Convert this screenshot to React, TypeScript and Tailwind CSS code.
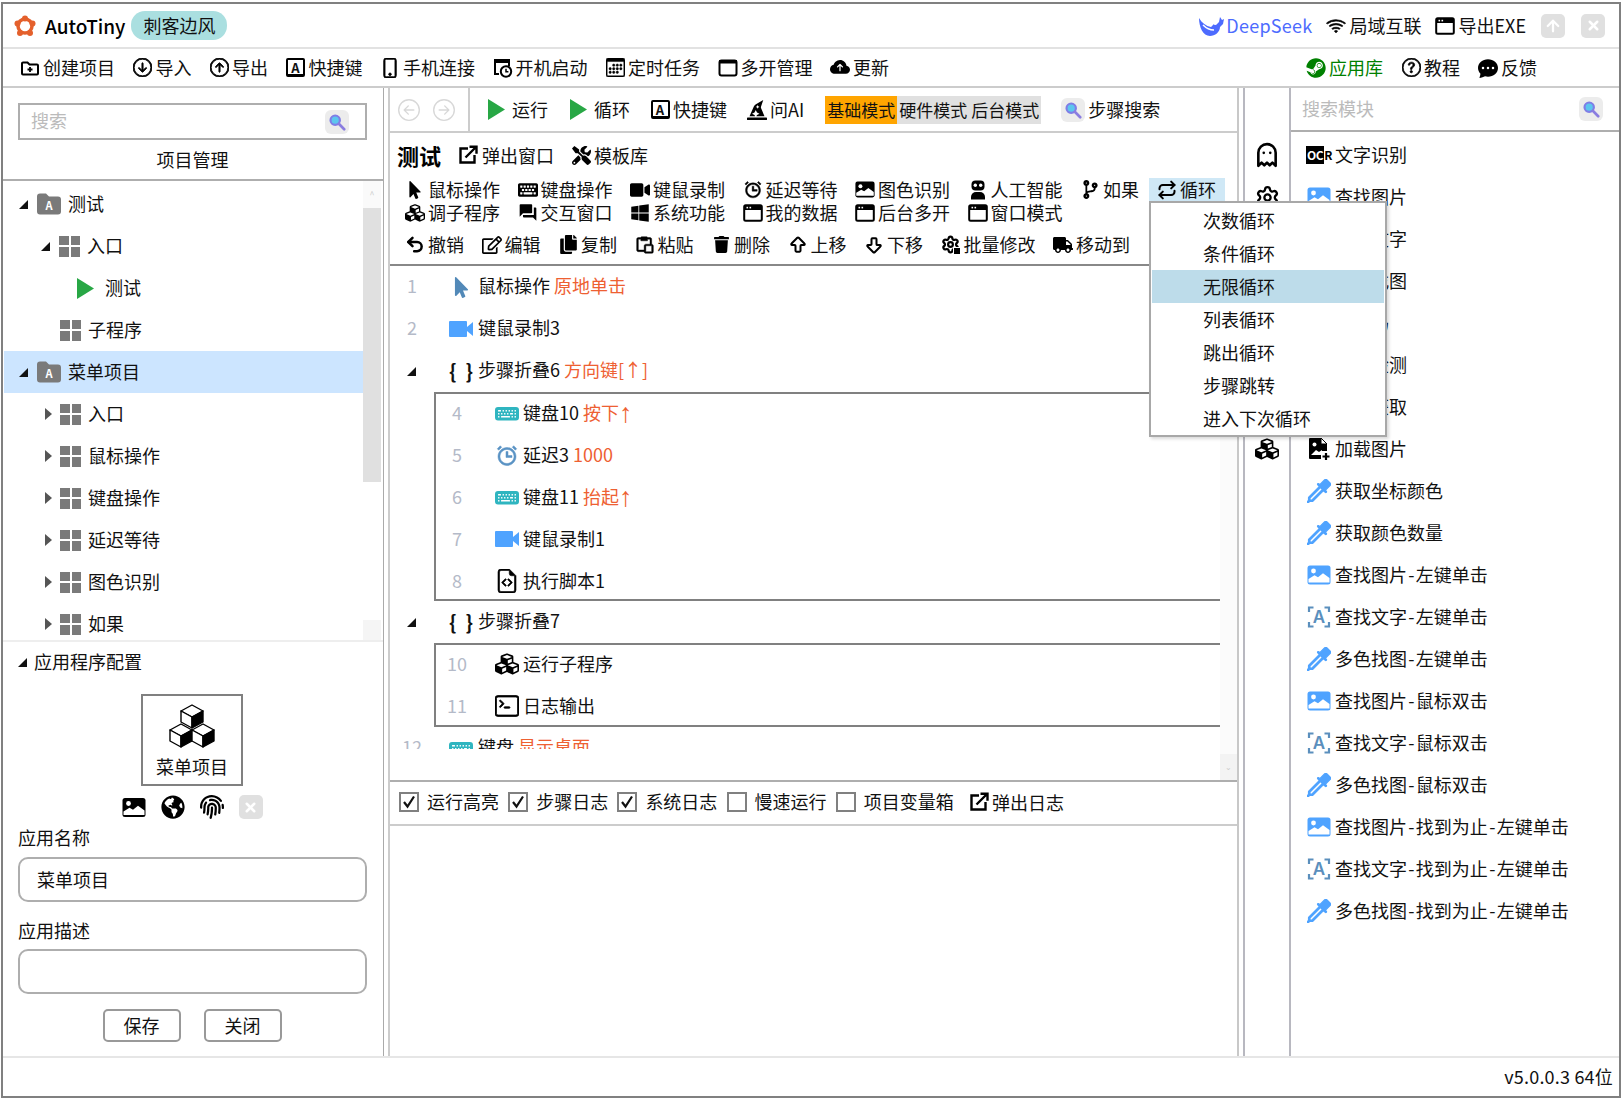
import React from 'react';
import { ArrowBigDown, ArrowBigUp, ArrowUp, Ghost, Repeat, Settings, Undo2, X } from 'lucide-react';
import {
  FaCodeBranch,
  FaCopy,
  FaCubes,
  FaFingerprint,
  FaGlobeAmericas,
  FaHatWizard,
  FaKeyboard,
  FaMousePointer,
  FaRegEdit,
  FaSteam,
  FaTools,
  FaTrash,
  FaTruck,
  FaVideo,
  FaWindows,
} from 'react-icons/fa';
import {
  BsArrowDownCircle,
  BsArrowLeftCircle,
  BsArrowRightCircle,
  BsArrowUpCircle,
  BsCalendar3,
  BsChatDotsFill,
  BsCloudArrowUpFill,
  BsEyedropper,
  BsFileEarmarkCode,
  BsKeyboardFill,
  BsPhone,
  BsQuestionCircle,
  BsTerminal,
  BsWifi,
} from 'react-icons/bs';
import { BiAlarm, BiPaste } from 'react-icons/bi';
import { MdQuestionAnswer } from 'react-icons/md';

const Tool = ({ icon, label, className = '', textClass = '' }: { icon: React.ReactNode; label: string; className?: string; textClass?: string }) => (
  <div className={`flex shrink-0 items-center gap-[3px] ${className}`}>
    <span className="flex h-5 w-5 shrink-0 items-center justify-center">{icon}</span>
    <span className={`whitespace-nowrap ${textClass}`}>{label}</span>
  </div>
);

const KeyA = () => (
  <span className="flex h-[19px] w-[19px] items-center justify-center rounded-[2px] border-2 border-b-[3px] border-black text-[13px] font-bold leading-none">
    A
  </span>
);

const WindowIcon = () => (
  <svg viewBox="0 0 20 20" className="h-5 w-5">
    <rect x="1.2" y="2.2" width="17.6" height="15.6" rx="1.5" fill="none" stroke="#000" strokeWidth="2" />
    <rect x="1" y="2" width="18" height="5" fill="#000" />
    <rect x="3.5" y="3.8" width="1.6" height="1.6" fill="#fff" />
    <rect x="6.5" y="3.8" width="1.6" height="1.6" fill="#fff" />
  </svg>
);

const PlainWindow = () => (
  <svg viewBox="0 0 20 20" className="h-5 w-5">
    <rect x="1.5" y="2.5" width="17" height="15" rx="2" fill="none" stroke="#000" strokeWidth="2" />
    <rect x="1" y="2" width="18" height="3.5" fill="#000" />
  </svg>
);

const BootIcon = () => (
  <svg viewBox="0 0 20 20" className="h-5 w-5">
    <rect x="1" y="1" width="16" height="4" fill="#000" />
    <path d="M2 5v11h4M16 5v3" fill="none" stroke="#000" strokeWidth="2" />
    <circle cx="13" cy="13.5" r="5.2" fill="#fff" stroke="#000" strokeWidth="2" />
    <path d="M13 10.8v3h2.4" fill="none" stroke="#000" strokeWidth="1.5" />
  </svg>
);

const FolderPlusIcon = () => (
  <svg viewBox="0 0 20 20" className="h-5 w-5">
    <path d="M2 5.5a1 1 0 0 1 1-1h4.5l2 2H17a1 1 0 0 1 1 1v8a1 1 0 0 1-1 1H3a1 1 0 0 1-1-1z" fill="none" stroke="#000" strokeWidth="2" />
    <path d="M10 9v5M7.5 11.5h5" stroke="#000" strokeWidth="1.8" />
  </svg>
);

const PopOut = () => (
  <svg viewBox="0 0 20 20" className="h-5 w-5">
    <path d="M10 3.500H2.500v14h14V10" fill="none" stroke="#000" strokeWidth="2.400" />
    <path d="M7.500 12.500L17 3M11.500 1.800h7v7" fill="none" stroke="#000" strokeWidth="2.400" />
  </svg>
);

const Pic = ({ color = '#000', size = 'h-5 w-6' }: { color?: string; size?: string }) => (
  <svg viewBox="0 0 24 20" className={size}>
    <rect x="0.5" y="0.5" width="23" height="19" rx="2.5" fill={color} />
    <circle cx="6.5" cy="6" r="2.4" fill="#fff" />
    <path d="M1.5 17.5v-3.5l6-3.8 3.5 2 5-4 6.500 4.800v4.500z" fill="#fff" />
  </svg>
);

const Robot = () => (
  <svg viewBox="0 0 20 20" className="h-5 w-5">
    <rect x="3.5" y="0.500" width="13" height="10" rx="4" fill="#000" />
    <circle cx="7.300" cy="5.200" r="1.700" fill="#fff" />
    <circle cx="12.700" cy="5.200" r="1.700" fill="#fff" />
    <path d="M3 19.500v-2.500a5 5 0 0 1 5-5h4a5 5 0 0 1 5 5v2.500z" fill="#000" />
  </svg>
);

const GearBatch = () => (
  <span className="relative flex h-5 w-5 items-center justify-center">
    <Settings size={19} strokeWidth={2.8} color="#000" />
    <span className="absolute bottom-0 right-0 h-[8px] w-[8px] border border-white bg-black" />
  </span>
);

const Play = () => (
  <svg viewBox="0 0 17 21" className="h-[21px] w-[17px] shrink-0">
    <polygon points="0,0 17,10.500 0,21" fill="#28a745" />
  </svg>
);

const SearchBtn = () => (
  <span className="flex h-6 w-6 shrink-0 items-center justify-center rounded-[6px] bg-[#ececec]">
    <svg viewBox="0 0 20 20" className="h-[18px] w-[18px]">
      <circle cx="8" cy="8" r="5.200" fill="#5cc6ee" stroke="#7f7de6" strokeWidth="2.400" />
      <path d="M12 12l6 6" stroke="#8a7de0" strokeWidth="3" strokeLinecap="round" />
    </svg>
  </span>
);

const GrayBtn = ({ children }: { children: React.ReactNode }) => (
  <span className="flex h-6 w-6 items-center justify-center rounded-[5px] bg-[#e0e0e0]">{children}</span>
);

const CornerArrow = () => (
  <svg viewBox="0 0 9 9" className="h-[9px] w-[9px] shrink-0">
    <polygon points="9,0 9,9 0,9" fill="#111" />
  </svg>
);

const SideArrow = () => (
  <svg viewBox="0 0 7 12" className="h-3 w-[7px] shrink-0">
    <polygon points="0,0 7,6 0,12" fill="#555" />
  </svg>
);

const FolderA = () => (
  <span className="relative flex h-[22px] w-6 shrink-0 items-center justify-center">
    <svg viewBox="0 0 24 22" className="absolute inset-0 h-[22px] w-6">
      <path d="M0 3.500a3 3 0 0 1 3-3h6l3 3h9a3 3 0 0 1 3 3v12a3 3 0 0 1-3 3H3a3 3 0 0 1-3-3z" fill="#7a7a7a" />
    </svg>
    <span className="relative mt-[3px] text-[11px] font-bold leading-none text-white">A</span>
  </span>
);

const GridIcon = () => (
  <span className="grid h-[21px] w-[21px] shrink-0 grid-cols-2 gap-[2px]">
    <span className="bg-[#7a7a7a]" />
    <span className="bg-[#7a7a7a]" />
    <span className="bg-[#7a7a7a]" />
    <span className="bg-[#7a7a7a]" />
  </span>
);

const DeepSeekLogo = () => (
  <svg viewBox="0 0 26 22" className="h-[22px] w-[26px] shrink-0">
    <path d="M1 3c3 5 7 8 12 9l3-3 2 1 3-3 1-5 2 3 2-1-1 5-3 3c0 5-5 9-10 9C5 21 1 12 1 3z" fill="#4d6bfe" />
    <path d="M5 10c3 3 6 5 11 5" fill="none" stroke="#fff" strokeWidth="1.500" />
    <circle cx="17" cy="9" r="1" fill="#fff" />
  </svg>
);

const Logo = () => (
  <svg viewBox="0 0 22 22" className="h-[22px] w-[22px] shrink-0">
    <circle cx="11" cy="11" r="7" fill="none" stroke="#e4602c" strokeWidth="3.500" />
    <circle cx="11" cy="3.500" r="3" fill="#e4602c" />
    <circle cx="3.500" cy="8.500" r="3" fill="#e4602c" />
    <circle cx="18.500" cy="8.500" r="3" fill="#e4602c" />
    <circle cx="6" cy="18" r="3" fill="#e4602c" />
    <circle cx="16" cy="18" r="3" fill="#e4602c" />
  </svg>
);

const Cube = ({ cx, y }: { cx: number; y: number }) => (
  <g stroke="#000" strokeWidth="1.400" strokeLinejoin="round">
    <polygon points={`${cx},${y} ${cx + 11},${y + 6} ${cx},${y + 12} ${cx - 11},${y + 6}`} fill="#fff" />
    <polygon points={`${cx - 11},${y + 6} ${cx},${y + 12} ${cx},${y + 23} ${cx - 11},${y + 17}`} fill="#fff" />
    <polygon points={`${cx + 11},${y + 6} ${cx},${y + 12} ${cx},${y + 23} ${cx + 11},${y + 17}`} fill="#000" />
  </g>
);

const AppCubes = () => (
  <svg viewBox="0 0 46 44" className="h-[44px] w-[46px] shrink-0">
    <Cube cx={23} y={1} />
    <Cube cx={12} y={20} />
    <Cube cx={34} y={20} />
  </svg>
);

const ScanA = () => (
  <svg viewBox="0 0 24 24" className="h-6 w-6">
    <path d="M2 7V2.500h4.500M22 7V2.500h-4.500M2 17v4.500h4.500M22 17v4.500h-4.500" fill="none" stroke="#5b8fbd" strokeWidth="2.200" />
    <text x="12" y="18" textAnchor="middle" fontSize="17" fontFamily="Inter, sans-serif" fontWeight="600" fill="#5b8fbd">
      A
    </text>
  </svg>
);

const Dropper = () => <BsEyedropper size={24} color="#4fa3ff" stroke="#4fa3ff" strokeWidth={0.8} />;

const LoadPic = () => (
  <svg viewBox="0 0 24 24" className="h-6 w-6">
    <path d="M3 1h11l6 6v7h-6v8H3a1 1 0 0 1-1-1V2a1 1 0 0 1 1-1z" fill="#000" />
    <path d="M14 1l6 6h-6z" fill="#fff" stroke="#000" />
    <circle cx="7.500" cy="7.500" r="2" fill="#fff" />
    <path d="M4 18l5-5 3 2 3-2v1l-1 4z" fill="#fff" />
    <path d="M19 16v7M15.500 19.500h7" stroke="#000" strokeWidth="2.200" />
  </svg>
);

const OcrIcon = () => (
  <span className="flex h-6 w-6 items-center justify-center text-[12px] font-bold leading-none tracking-[-0.5px] text-black">
    <span className="bg-black px-[1px] py-[3px] text-white">OC</span>
    <span>R</span>
  </span>
);

const Braces = () => (
  <span className="flex w-6 shrink-0 justify-between text-[20px] font-bold leading-none">
    <span>{'{'}</span>
    <span>{'}'}</span>
  </span>
);

const Orange = ({ children }: { children: React.ReactNode }) => <span className="text-[#ee6032]">{children}</span>;

const NarrowArrow = () => <span className="align-[-2px] text-[27px] leading-[0] [font-family:'Liberation_Sans',sans-serif]">↑</span>;

const Video = () => (
  <svg viewBox="0 0 24 16" className="h-4 w-6">
    <rect x="0" y="0" width="18" height="16" rx="1" fill="#4fa3ff" />
    <polygon points="24,1 18,6 18,10 24,15" fill="#4fa3ff" />
  </svg>
);

const TealKey = () => <BsKeyboardFill size={24} color="#2fb5c0" />;

const treeRows: { pad: number; arrow?: 'corner' | 'side'; icon: React.ReactNode; label: string; selected?: boolean; textGap?: number }[] = [
  { pad: 15, arrow: 'corner', icon: <FolderA />, label: '测试' },
  { pad: 37, arrow: 'corner', icon: <GridIcon />, label: '入口' },
  { pad: 73, icon: <Play />, label: '测试', textGap: 11 },
  { pad: 56, icon: <GridIcon />, label: '子程序' },
  { pad: 15, arrow: 'corner', icon: <FolderA />, label: '菜单项目', selected: true },
  { pad: 41, arrow: 'side', icon: <GridIcon />, label: '入口' },
  { pad: 41, arrow: 'side', icon: <GridIcon />, label: '鼠标操作' },
  { pad: 41, arrow: 'side', icon: <GridIcon />, label: '键盘操作' },
  { pad: 41, arrow: 'side', icon: <GridIcon />, label: '延迟等待' },
  { pad: 41, arrow: 'side', icon: <GridIcon />, label: '图色识别' },
  { pad: 41, arrow: 'side', icon: <GridIcon />, label: '如果' },
];

const moduleRows: [React.ReactNode, string][] = [
  [<OcrIcon />, '文字识别'],
  [<Pic color="#4fa3ff" />, '查找图片'],
  [<ScanA />, '查找文字'],
  [<Dropper />, '多色找图'],
  [<ScanA />, '二维码'],
  [<ScanA />, '目标检测'],
  [<ScanA />, '图片获取'],
  [<LoadPic />, '加载图片'],
  [<Dropper />, '获取坐标颜色'],
  [<Dropper />, '获取颜色数量'],
  [<Pic color="#4fa3ff" />, '查找图片-左键单击'],
  [<ScanA />, '查找文字-左键单击'],
  [<Dropper />, '多色找图-左键单击'],
  [<Pic color="#4fa3ff" />, '查找图片-鼠标双击'],
  [<ScanA />, '查找文字-鼠标双击'],
  [<Dropper />, '多色找图-鼠标双击'],
  [<Pic color="#4fa3ff" />, '查找图片-找到为止-左键单击'],
  [<ScanA />, '查找文字-找到为止-左键单击'],
  [<Dropper />, '多色找图-找到为止-左键单击'],
];

const StepRow = ({ num, icon, inner, children }: { num?: string; icon: React.ReactNode; inner?: boolean; children: React.ReactNode }) => (
  <div className="flex h-[42px] items-center">
    <span className={`relative shrink-0 text-center text-[#b4bac8] ${inner ? '-top-px w-[42px]' : '-top-[2px] w-[44px]'}`}>{num}</span>
    <span className={`flex w-6 shrink-0 items-center justify-center ${inner ? 'ml-[17px]' : 'ml-[15px]'}`}>{icon}</span>
    <span className={`relative whitespace-nowrap ${inner ? '-top-px ml-[4px]' : '-top-[2px] ml-[5px]'}`}>{children}</span>
  </div>
);

const Check = ({ on, label }: { on?: boolean; label: string }) => (
  <div className="flex items-center gap-[8px]">
    <span className="flex h-5 w-5 items-center justify-center border-2 border-[#808080]">
      {on && (
        <svg viewBox="0 0 16 16" className="h-4 w-4">
          <path d="M3 8l3.500 4.500L13 2.500" fill="none" stroke="#111" strokeWidth="2.200" />
        </svg>
      )}
    </span>
    <span className="relative -top-px">{label}</span>
  </div>
);

const ModuleLabel = ({ text }: { text: string }) => (
  <span className="relative -top-px whitespace-nowrap">
    {text.split('-').map((part, i) => (
      <React.Fragment key={i}>
        {i > 0 && <span className="mx-[1.3px]">-</span>}
        {part}
      </React.Fragment>
    ))}
  </span>
);

export default function App() {
  return (
    <div className="h-[1099px] w-[1622px] overflow-hidden bg-white pl-[1px] pt-[2px] text-[18px] text-[#111] [font-family:'Noto_Sans_CJK_SC','Noto_Sans',sans-serif]">
      <div className="relative flex h-[1096px] w-[1620px] flex-col border-2 border-[#808080]">
        {/* title bar */}
        <div className="flex h-[43px] shrink-0 items-center pl-[11px] pr-[14px]">
          <Logo />
          <span className="ml-[9px] text-[19px] font-medium leading-none text-black">AutoTiny</span>
          <span className="ml-[6px] flex h-[29px] w-[96px] items-center justify-center rounded-[14px] bg-[#aadfe0]">刺客边风</span>
          <div className="ml-auto flex items-center">
            <DeepSeekLogo />
            <span className="ml-[2px] tracking-[0.25px] text-[#4d6bfe]">DeepSeek</span>
            <Tool className="ml-[14px]" icon={<BsWifi size={22} strokeWidth={0.6} stroke="#000" color="#000" />} label="局域互联" />
            <Tool className="ml-[14px]" icon={<WindowIcon />} label="导出EXE" />
            <span className="ml-[15px]">
              <GrayBtn>
                <ArrowUp size={18} strokeWidth={3} color="#fff" />
              </GrayBtn>
            </span>
            <span className="ml-[16px]">
              <GrayBtn>
                <X size={15} strokeWidth={4} color="#fff" />
              </GrayBtn>
            </span>
          </div>
        </div>
        <div className="h-[2px] shrink-0 bg-[#e2e2e2]" />
        {/* main toolbar */}
        <div className="flex h-[37px] shrink-0 items-center gap-[17.5px] pl-[17px] pr-[82px]">
          <Tool icon={<FolderPlusIcon />} label="创建项目" />
          <Tool icon={<BsArrowDownCircle size={19} strokeWidth={0.7} stroke="#000" color="#000" />} label="导入" />
          <Tool icon={<BsArrowUpCircle size={19} strokeWidth={0.7} stroke="#000" color="#000" />} label="导出" />
          <Tool icon={<KeyA />} label="快捷键" />
          <Tool icon={<BsPhone size={20} strokeWidth={0.7} stroke="#000" color="#000" />} label="手机连接" />
          <Tool icon={<BootIcon />} label="开机启动" />
          <Tool icon={<BsCalendar3 size={19} strokeWidth={0.4} stroke="#000" color="#000" />} label="定时任务" />
          <Tool icon={<PlainWindow />} label="多开管理" />
          <Tool icon={<BsCloudArrowUpFill size={21} color="#000" />} label="更新" />
          <div className="ml-auto flex items-center gap-[18px]">
            <Tool icon={<FaSteam size={20} color="#008000" />} label="应用库" textClass="text-[#008000]" />
            <Tool icon={<BsQuestionCircle size={19} strokeWidth={0.6} stroke="#000" color="#000" />} label="教程" />
            <Tool icon={<BsChatDotsFill size={20} color="#000" />} label="反馈" />
          </div>
        </div>
        <div className="h-[2px] shrink-0 bg-[#cccccc]" />

        <div className="flex min-h-0 flex-1">
          {/* left column */}
          <div className="flex w-[381px] shrink-0 flex-col border-r border-[#aaaaaa]">
            <div className="pl-[15px] pr-[16px] pt-[15px]">
              <div className="flex h-[37px] items-center justify-between border-2 border-[#aeaeae] pl-[11px] pr-[16px]">
                <span className="relative -top-px text-[#bbbbbb]">搜索</span>
                <SearchBtn />
              </div>
            </div>
            <div className="flex h-[39px] shrink-0 items-center justify-center pr-px">项目管理</div>
            <div className="h-[2px] shrink-0 bg-[#aeaeae]" />
            <div className="flex h-[459px] shrink-0 overflow-hidden">
              <div className="min-w-0 flex-1 pl-[1px] pt-[2px]">
                {treeRows.map((r, i) => (
                  <div key={i} className={`flex h-[42px] items-center ${r.selected ? 'bg-[#cce5ff]' : ''}`} style={{ paddingLeft: r.pad }}>
                    {r.arrow === 'corner' && <span className="mr-[9px]"><CornerArrow /></span>}
                    {r.arrow === 'side' && <span className="mr-[8px]"><SideArrow /></span>}
                    {r.icon}
                    <span className="relative -top-px whitespace-nowrap" style={{ marginLeft: r.textGap ?? 7 }}>{r.label}</span>
                  </div>
                ))}
              </div>
              <div className="mr-[2px] flex w-[18px] shrink-0 flex-col">
                <div className="flex h-[27px] items-center justify-center bg-[#fafafa] text-[9px] leading-none text-[#cccccc]">^</div>
                <div className="h-[274px] bg-[#e0e0e0]" />
                <div className="flex-1" />
                <div className="h-[20px] bg-[#f5f5f5]" />
              </div>
            </div>
            <div className="h-[2px] shrink-0 bg-[#eeeeee]" />
            {/* app config */}
            <div className="flex h-[40px] shrink-0 items-center pl-[15px]">
              <CornerArrow />
              <span className="relative -top-px ml-[7px]">应用程序配置</span>
            </div>
            <div className="mt-[12px] mr-[2px] flex h-[92px] w-[102px] shrink-0 flex-col items-center self-center border-2 border-[#808080]">
              <span className="mt-[8px]"><AppCubes /></span>
              <span className="mt-[6px] leading-[24px]">菜单项目</span>
            </div>
            <div className="mt-[9px] flex h-6 shrink-0 items-center justify-center gap-[15px] pr-[2px]">
              <Pic size="h-[21px] w-6" />
              <FaGlobeAmericas size={24} color="#000" />
              <FaFingerprint size={24} color="#000" />
              <GrayBtn>
                <X size={15} strokeWidth={4} color="#fff" />
              </GrayBtn>
            </div>
            <div className="mt-[6px] h-[26px] shrink-0 pl-[15px] leading-[24px]">应用名称</div>
            <div className="ml-[15px] mr-[16px] mt-[6px] flex h-[45px] shrink-0 items-center rounded-[10px] border-2 border-[#aeaeae] pl-[17px]">菜单项目</div>
            <div className="mt-[16px] h-[26px] shrink-0 pl-[15px] leading-[24px]">应用描述</div>
            <div className="ml-[15px] mr-[16px] mt-[5px] h-[45px] shrink-0 rounded-[10px] border-2 border-[#aeaeae]" />
            <div className="mt-[15px] flex shrink-0 justify-center gap-[23px] pr-[2px]">
              <button className="flex h-[33px] w-[78px] items-center justify-center rounded-[5px] border-2 border-[#999999]">保存</button>
              <button className="flex h-[33px] w-[78px] items-center justify-center rounded-[5px] border-2 border-[#999999]">关闭</button>
            </div>
          </div>

          <div className="w-[4px] shrink-0" />

          {/* center column */}
          <div className="flex w-[851px] shrink-0 flex-col border-x-2 border-l-[#cccccc] border-r-[#c8c8c8]">
            <div className="flex h-[43px] shrink-0 items-center">
              <div className="flex h-full w-[80px] shrink-0 items-center gap-[13px] border-r-2 border-[#cccccc] pl-[8px]">
                <BsArrowLeftCircle size={22} color="#d8d8d8" />
                <BsArrowRightCircle size={22} color="#d8d8d8" />
              </div>
              <div className="ml-[18px] flex items-center gap-[7px]">
                <Play />
                <span>运行</span>
              </div>
              <div className="ml-[22px] flex items-center gap-[7px]">
                <Play />
                <span>循环</span>
              </div>
              <Tool className="ml-[20px]" icon={<KeyA />} label="快捷键" />
              <Tool className="ml-[20px]" icon={<FaHatWizard size={22} color="#000" />} label="问AI" />
              <div className="ml-[21px] flex h-7 items-center text-[17px] leading-none">
                <span className="flex h-full w-[72px] items-center justify-center bg-[#ffa500]">基础模式</span>
                <span className="flex h-full w-[72px] items-center justify-center bg-[#e0e0e0]">硬件模式</span>
                <span className="flex h-full w-[72px] items-center justify-center bg-[#e0e0e0]">后台模式</span>
              </div>
              <div className="ml-[20px] flex items-center gap-[3px]">
                <SearchBtn />
                <span>步骤搜索</span>
              </div>
            </div>
            <div className="h-[2px] shrink-0 bg-[#cccccc]" />

            {/* editor header */}
            <div className="flex h-[44px] shrink-0 items-center pl-[7px]">
              <span className="text-[22px] font-bold leading-none text-black">测试</span>
              <Tool className="ml-[17px]" icon={<PopOut />} label="弹出窗口" textClass="ml-[1px]" />
              <Tool className="ml-[17px]" icon={<FaTools size={19} color="#000" />} label="模板库" />
            </div>
            <div className="relative shrink-0 pl-[15px] pt-[1px]">
              <div className="flex h-[23px] items-center">
                <Tool className="w-[112.5px]" icon={<FaMousePointer size={18} color="#000" />} label="鼠标操作" />
                <Tool className="w-[112.5px]" icon={<FaKeyboard size={20} color="#000" />} label="键盘操作" />
                <Tool className="w-[112.5px]" icon={<FaVideo size={20} color="#000" />} label="键鼠录制" />
                <Tool className="w-[112.5px]" icon={<BiAlarm size={21} color="#000" stroke="#000" strokeWidth={0.5} />} label="延迟等待" />
                <Tool className="w-[112.5px]" icon={<Pic size="h-[17px] w-5" />} label="图色识别" />
                <Tool className="w-[112.5px]" icon={<Robot />} label="人工智能" />
                <Tool className="w-[69px]" icon={<FaCodeBranch size={19} color="#000" />} label="如果" />
                <div className="flex h-[23px] w-[76px] items-center bg-[#cfe8f6] pl-[8px]">
                  <Tool icon={<Repeat size={20} strokeWidth={2.4} color="#000" />} label="循环" />
                </div>
              </div>
              <div className="flex h-[23px] items-center">
                <Tool className="w-[112.5px]" icon={<FaCubes size={20} color="#000" />} label="调子程序" />
                <Tool className="w-[112.5px]" icon={<MdQuestionAnswer size={21} color="#000" />} label="交互窗口" />
                <Tool className="w-[112.5px]" icon={<FaWindows size={20} color="#000" />} label="系统功能" />
                <Tool className="w-[112.5px]" icon={<WindowIcon />} label="我的数据" />
                <Tool className="w-[112.5px]" icon={<WindowIcon />} label="后台多开" />
                <Tool className="w-[112.5px]" icon={<WindowIcon />} label="窗口模式" />
              </div>
              <div className="mt-[9px] flex h-[23px] items-center gap-[17.5px]">
                <Tool icon={<Undo2 size={21} strokeWidth={3} color="#000" />} label="撤销" />
                <Tool icon={<FaRegEdit size={20} color="#000" />} label="编辑" />
                <Tool icon={<FaCopy size={19} color="#000" />} label="复制" />
                <Tool icon={<BiPaste size={22} color="#000" stroke="#000" strokeWidth={0.5} />} label="粘贴" />
                <Tool icon={<FaTrash size={17} color="#000" />} label="删除" />
                <Tool icon={<ArrowBigUp size={22} strokeWidth={2.4} color="#000" />} label="上移" />
                <Tool icon={<ArrowBigDown size={22} strokeWidth={2.4} color="#000" />} label="下移" />
                <Tool icon={<GearBatch />} label="批量修改" />
                <Tool icon={<FaTruck size={20} color="#000" />} label="移动到" />
              </div>
            </div>
            <div className="mt-[8px] h-[2px] shrink-0 bg-[#888888]" />

            {/* step list */}
            <div className="flex h-[514px] shrink-0">
              <div className="min-w-0 flex-1">
                <div className="h-[483px] overflow-hidden">
                  <StepRow num="1" icon={<FaMousePointer size={21} color="#5289b8" />}>
                    鼠标操作 <Orange>原地单击</Orange>
                  </StepRow>
                  <StepRow num="2" icon={<Video />}>键鼠录制3</StepRow>
                  <div className="flex h-[42px] items-center">
                    <span className="ml-[17px] mr-[33px] shrink-0"><CornerArrow /></span>
                    <Braces />
                    <span className="relative -top-[2px] ml-[5px] whitespace-nowrap">步骤折叠6 <Orange>方向键[↑]</Orange></span>
                  </div>
                  <div className="ml-[44px] h-[209px] border-y-2 border-l-2 border-[#808080]">
                    <div className="-mt-[2px]">
                      <StepRow inner num="4" icon={<TealKey />}>键盘10 <Orange>按下<NarrowArrow /></Orange></StepRow>
                      <StepRow inner num="5" icon={<BiAlarm size={25} color="#5a93c4" stroke="#5a93c4" strokeWidth={0.5} />}>延迟3 <Orange>1000</Orange></StepRow>
                      <StepRow inner num="6" icon={<TealKey />}>键盘11 <Orange>抬起<NarrowArrow /></Orange></StepRow>
                      <StepRow inner num="7" icon={<Video />}>键鼠录制1</StepRow>
                      <StepRow inner num="8" icon={<BsFileEarmarkCode size={24} color="#000" strokeWidth={0.4} stroke="#000" />}>执行脚本1</StepRow>
                    </div>
                  </div>
                  <div className="flex h-[42px] items-center">
                    <span className="ml-[17px] mr-[33px] shrink-0"><CornerArrow /></span>
                    <Braces />
                    <span className="relative -top-[2px] ml-[5px] whitespace-nowrap">步骤折叠7</span>
                  </div>
                  <div className="ml-[44px] h-[84px] border-y-2 border-l-2 border-[#808080]">
                    <div className="-mt-[2px]">
                      <StepRow inner num="10" icon={<FaCubes size={24} color="#000" />}>运行子程序</StepRow>
                      <StepRow inner num="11" icon={<BsTerminal size={24} color="#000" strokeWidth={0.5} stroke="#000" />}>日志输出</StepRow>
                    </div>
                  </div>
                  <StepRow num="12" icon={<TealKey />}>
                    键盘 <Orange>显示桌面</Orange>
                  </StepRow>
                </div>
              </div>
              <div className="flex w-[17px] shrink-0 flex-col justify-end bg-[#fbfbfb]">
                <div className="flex h-[26px] items-center justify-center bg-[#f3f3f3] text-[8px] leading-none text-[#cccccc]">⌄</div>
              </div>
            </div>
            <div className="h-[2px] shrink-0 bg-[#aeaeae]" />
            <div className="flex h-[42px] shrink-0 items-center gap-[9.2px] pb-[2px] pl-[9px]">
              <Check on label="运行高亮" />
              <Check on label="步骤日志" />
              <Check on label="系统日志" />
              <Check label="慢速运行" />
              <Check label="项目变量箱" />
              <Tool className="ml-[6px]" icon={<PopOut />} label="弹出日志" />
            </div>
            <div className="h-[2px] shrink-0 bg-[#cccccc]" />
          </div>

          <div className="w-[4px] shrink-0" />

          {/* module icon rail */}
          <div className="flex w-[48px] shrink-0 flex-col items-center border-x-2 border-x-[#b8b8c0] pt-[46px]">
            <span className="flex h-[42px] items-center"><Ghost size={26} strokeWidth={2.4} color="#000" /></span>
            <span className="flex h-[42px] items-center"><Settings size={25} strokeWidth={2.2} color="#000" /></span>
            <span className="h-[210px]" />
            <span className="flex h-[42px] items-center"><FaCubes size={24} color="#000" /></span>
          </div>

          {/* module list */}
          <div className="min-w-0 flex-1">
            <div className="flex h-[44px] items-center justify-between border-b-2 border-[#aeaeae] pl-[11px] pr-[16px]">
              <span className="relative -top-px text-[#bbbbbb]">搜索模块</span>
              <SearchBtn />
            </div>
            <div className="pl-[16px] pt-[2px]">
              {moduleRows.map(([icon, label], i) => (
                <div key={i} className="flex h-[42px] items-center gap-[4px]">
                  <span className="flex w-6 shrink-0 items-center justify-center">{icon}</span>
                  <ModuleLabel text={label} />
                </div>
              ))}
            </div>
          </div>
        </div>

        <div className="h-[2px] shrink-0 bg-[#e6e6e6]" />
        <div className="flex h-[38px] shrink-0 items-center justify-end pb-[2px] pr-[6px] tracking-[0.2px]">v5.0.0.3 64位</div>

        {/* loop dropdown */}
        <div className="absolute left-[1146px] top-[197px] z-10 w-[238px] border-2 border-[#a8a8a8] bg-white pt-[1px] shadow-[2px_2px_3px_rgba(0,0,0,0.15)]">
          {['次数循环', '条件循环', '无限循环', '列表循环', '跳出循环', '步骤跳转', '进入下次循环'].map((t, i) => (
            <div key={t} className={`mx-px flex h-[33px] items-center pl-[51px] ${i === 2 ? 'bg-[#bddcea]' : ''}`}>
              {t}
            </div>
          ))}
        </div>
      </div>
    </div>
  );
}
